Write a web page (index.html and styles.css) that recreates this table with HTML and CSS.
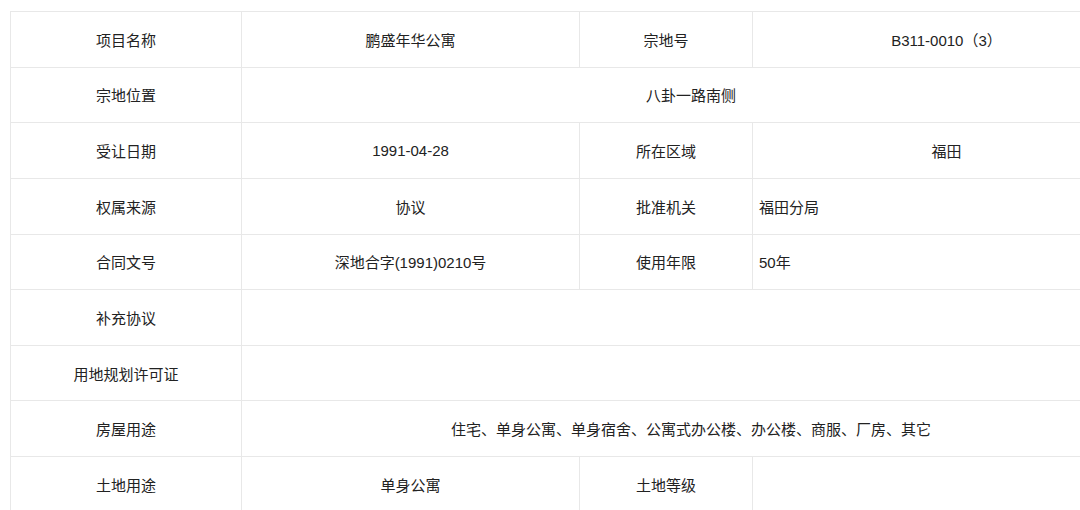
FILE: index.html
```html
<!DOCTYPE html>
<html lang="zh-CN">
<head>
<meta charset="utf-8">
<title>宗地信息</title>
<link rel="stylesheet" href="styles.css">
</head>
<body>
<div class="wrap">
<table class="info">
  <colgroup>
    <col class="c1"><col class="c2"><col class="c3"><col class="c4">
  </colgroup>
  <tr><td>项目名称</td><td>鹏盛年华公寓</td><td>宗地号</td><td>B311-0010（3）</td></tr>
  <tr><td>宗地位置</td><td colspan="3">八卦一路南侧</td></tr>
  <tr><td>受让日期</td><td>1991-04-28</td><td>所在区域</td><td>福田</td></tr>
  <tr><td>权属来源</td><td>协议</td><td>批准机关</td><td class="left">福田分局</td></tr>
  <tr><td>合同文号</td><td>深地合字(1991)0210号</td><td>使用年限</td><td class="left">50年</td></tr>
  <tr><td>补充协议</td><td colspan="3"></td></tr>
  <tr><td>用地规划许可证</td><td colspan="3"></td></tr>
  <tr><td>房屋用途</td><td colspan="3">住宅、单身公寓、单身宿舍、公寓式办公楼、办公楼、商服、厂房、其它</td></tr>
  <tr><td>土地用途</td><td>单身公寓</td><td>土地等级</td><td></td></tr>
</table>
</div>
</body>
</html>
```

FILE: styles.css
```css
html, body {
  margin: 0;
  padding: 0;
  overflow: hidden;
  background: #ffffff;
}
.wrap {
  padding: 11px 0 0 10px;
  width: 1070px;
  height: 499px;
  overflow: hidden;
}
.info {
  border-collapse: collapse;
  table-layout: fixed;
  width: 1130px;
  font-family: "Liberation Sans", "Noto Sans CJK SC", sans-serif;
  font-size: 15px;
  color: #222;
}
.c1 { width: 231px; }
.c2 { width: 338px; }
.c3 { width: 173px; }
.c4 { width: 388px; }
.info td {
  border: 1px solid #e8e8e8;
  height: 54.625px;
  padding: 0 6px;
  text-align: center;
  vertical-align: middle;
}
.info td.left {
  text-align: left;
}
```
